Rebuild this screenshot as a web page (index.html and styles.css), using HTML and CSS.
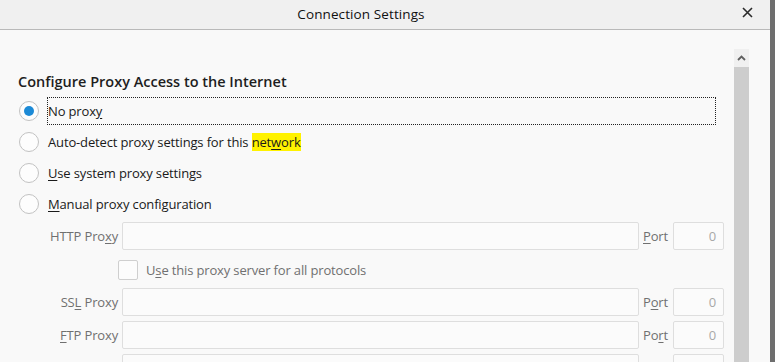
FILE: index.html
```html
<!DOCTYPE html>
<html>
<head>
<meta charset="utf-8">
<link rel="stylesheet" href="styles.css">
</head>
<body>
<div class="window">
  <div class="main">
    <header class="titlebar">
      <span class="title">Connection Settings</span>
      <span class="close">
        <svg width="11" height="11" viewBox="0 0 11 11"><path d="M1 1 L10 10 M10 1 L1 10" stroke="#2b2b2b" stroke-width="1.6" fill="none"/></svg>
      </span>
    </header>
    <div class="body">
      <div class="content">
        <h2 class="heading">Configure Proxy Access to the Internet</h2>
        <div class="radios">
          <div class="radio-row">
            <span class="radio checked"><span class="dot"></span></span>
            <span class="label focused">No prox<u>y</u></span>
          </div>
          <div class="radio-row">
            <span class="radio"></span>
            <span class="label">Auto-detect proxy settings for this <mark>net<u>w</u>ork</mark></span>
          </div>
          <div class="radio-row">
            <span class="radio"></span>
            <span class="label"><u>U</u>se system proxy settings</span>
          </div>
          <div class="radio-row">
            <span class="radio"></span>
            <span class="label"><u>M</u>anual proxy configuration</span>
          </div>
        </div>
        <div class="manual">
          <span class="flabel">HTTP Pro<u>x</u>y</span>
          <span class="field"></span>
          <span class="plabel"><u>P</u>ort</span>
          <span class="field port">0</span>

          <span class="check-row">
            <span class="checkbox"></span>
            <span class="clabel">U<u>s</u>e this proxy server for all protocols</span>
          </span>

          <span class="flabel">SS<u>L</u> Proxy</span>
          <span class="field"></span>
          <span class="plabel">P<u>o</u>rt</span>
          <span class="field port">0</span>

          <span class="flabel"><u>F</u>TP Proxy</span>
          <span class="field"></span>
          <span class="plabel">Po<u>r</u>t</span>
          <span class="field port">0</span>

          <span class="flabel"></span>
          <span class="field"></span>
          <span class="plabel"></span>
          <span class="field port"></span>
        </div>
      </div>
      <div class="scrollbar">
        <div class="sb-up">
          <svg width="9" height="6" viewBox="0 0 9 6"><path d="M1 5 L4.5 1.5 L8 5" stroke="#606060" stroke-width="1.8" fill="none"/></svg>
        </div>
        <div class="sb-thumb"></div>
      </div>
    </div>
  </div>
  <div class="edge"></div>
</div>
</body>
</html>
```
FILE: styles.css
```css
* { box-sizing: border-box; }
html, body { margin: 0; padding: 0; }
body {
  width: 775px;
  height: 362px;
  overflow: hidden;
  font-family: "Open Sans", "Noto Sans", sans-serif;
  font-size: 13px;
  letter-spacing: -0.15px;
  color: #1a1a1a;
  background: #f9f9f9;
}
.window {
  display: flex;
  height: 362px;
}
.main {
  width: 770px;
  display: flex;
  flex-direction: column;
}
.edge {
  width: 5px;
  background: #6e6e6e;
}
.titlebar {
  height: 30px;
  background: #f0f0f0;
  border-bottom: 1px solid #b9b9b9;
  display: flex;
  align-items: center;
  justify-content: center;
  position: relative;
  padding-right: 48px;
  flex: none;
}
.title {
  font-size: 13.5px;
  letter-spacing: 0.1px;
  color: #111;
  margin-top: -2px;
}
.close {
  position: absolute;
  right: 17px;
  top: 7px;
  width: 11px;
  height: 11px;
  display: flex;
}
.body {
  flex: 1;
  display: flex;
  padding-top: 19px;
  padding-right: 21px;
  overflow: hidden;
}
.content {
  flex: 1;
  min-width: 0;
  padding-left: 18px;
  padding-right: 18px;
}
.heading {
  margin: 23px 0 0 0;
  font-size: 14.5px;
  font-weight: 600;
  letter-spacing: 0;
  color: #1e1e1e;
  line-height: 20px;
}
.radios {
  margin-top: 3px;
  display: flex;
  flex-direction: column;
}
.radio-row {
  height: 31px;
  display: flex;
  align-items: center;
}
.radio {
  width: 20px;
  height: 20px;
  border: 1px solid #c2c2c2;
  border-radius: 50%;
  background: #fdfdfd;
  margin-left: 1px;
  margin-right: 8px;
  display: flex;
  align-items: center;
  justify-content: center;
  flex: none;
}
.dot {
  width: 10px;
  height: 10px;
  border-radius: 50%;
  background: #1c8ad6;
}
.label {
  flex: 1;
  height: 28px;
  line-height: 26px;
  padding-left: 0px;
  border: 1px solid transparent;
  white-space: nowrap;
}
.label.focused {
  border: 1px dotted #222;
}
mark {
  background: #fff200;
  color: inherit;
}
u { text-decoration: underline; text-underline-offset: 2px; }
.manual {
  margin-top: 3px;
  display: grid;
  grid-template-columns: 100px 517px 26px 51px;
  column-gap: 4px;
  row-gap: 5px;
  grid-auto-rows: 28px;
  color: #707070;
}
.flabel {
  text-align: right;
  line-height: 28px;
  white-space: nowrap;
}
.plabel {
  line-height: 28px;
  white-space: nowrap;
}
.field {
  border: 1px solid #dedede;
  border-radius: 2px;
  background: #fbfbfb;
}
.field.port {
  text-align: right;
  line-height: 26px;
  padding-right: 7px;
  color: #a8a8a8;
}
.check-row {
  grid-column: 1 / -1;
  display: flex;
  align-items: center;
  padding-left: 100px;
  height: 29px;
  margin-bottom: 1px;
}
.checkbox {
  width: 20px;
  height: 20px;
  border: 1px solid #cfcfcf;
  border-radius: 2px;
  background: #fcfcfc;
  margin-right: 8px;
  flex: none;
}
.clabel { white-space: nowrap; }
.scrollbar {
  width: 15px;
  display: flex;
  flex-direction: column;
  flex: none;
}
.sb-up {
  height: 18px;
  background: #f0f0f0;
  display: flex;
  align-items: center;
  justify-content: center;
}
.sb-thumb {
  flex: 1;
  background: #cdcdcd;
}
```
